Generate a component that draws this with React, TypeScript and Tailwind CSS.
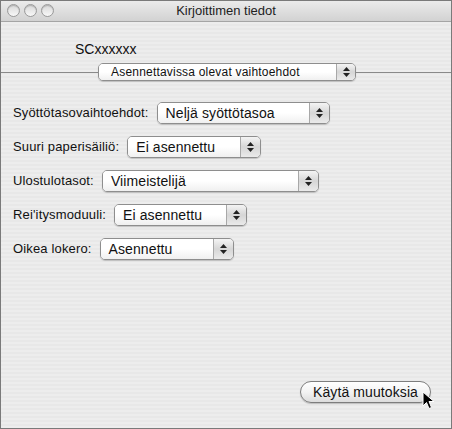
import React from "react";

const font = { fontFamily: '"Liberation Sans", Arial, sans-serif' };

function Arrows({ small }: { small?: boolean }) {
  return (
    <div
      className={`flex flex-col items-center justify-center gap-[2px] border-l border-[#a8a8a8] bg-gradient-to-b from-[#f4f4f4] via-[#d6d6d6] to-[#eaeaea] ${
        small ? "w-[19px]" : "w-[20px]"
      }`}
    >
      <svg width="7" height="4" viewBox="0 0 7 4">
        <path d="M3.5 0 L7 4 L0 4 Z" fill="#222" />
      </svg>
      <svg width="7" height="4" viewBox="0 0 7 4">
        <path d="M0 0 L7 0 L3.5 4 Z" fill="#222" />
      </svg>
    </div>
  );
}

function Popup({
  value,
  width,
  small,
}: {
  value: string;
  width: string;
  small?: boolean;
}) {
  return (
    <div
      className={`flex shrink-0 overflow-hidden rounded-[5px] border border-[#8e8e8e] shadow-[0_1px_1px_rgba(0,0,0,0.18)] ${width} ${
        small ? "h-[18px]" : "h-[22px]"
      }`}
    >
      <div
        className={`flex flex-1 items-center bg-gradient-to-b from-white via-white to-[#f0f0f0] text-[#111] ${
          small ? "pl-[12px] text-[12px] tracking-[0.2px]" : "pl-[8px] text-[14px] tracking-[0.1px]"
        }`}
      >
        {value}
      </div>
      <Arrows small={small} />
    </div>
  );
}

function Row({ label, value, width }: { label: string; value: string; width: string }) {
  return (
    <div className="flex items-center gap-[8px] pl-[12px]">
      <span className="text-[13px] tracking-[0.15px] text-[#111]">{label}</span>
      <Popup value={value} width={width} />
    </div>
  );
}

export default function App() {
  return (
    <div
      style={font}
      className="relative flex h-[429px] w-[452px] flex-col overflow-hidden border border-[#7a7a7a] bg-[#ececec]"
    >
      {/* title bar */}
      <div className="relative flex h-[21px] shrink-0 items-center justify-center border-b border-[#a5a5a5] bg-gradient-to-b from-[#ebebeb] to-[#d2d2d2]">
        <div className="absolute left-[6px] top-[3px] flex gap-[4px]">
          {[0, 1, 2].map((i) => (
            <div
              key={i}
              className="h-[13px] w-[13px] rounded-full border border-[#9a9a9a] bg-gradient-to-b from-[#d8d8d8] to-[#f8f8f8] shadow-[inset_0_1px_1px_rgba(0,0,0,0.2)]"
            />
          ))}
        </div>
        <span className="text-[13px] text-[#222]">Kirjoittimen tiedot</span>
      </div>

      {/* body */}
      <div className="flex flex-1 flex-col bg-[repeating-linear-gradient(0deg,#ededed_0px,#ededed_2px,#e8e8e8_2px,#e8e8e8_4px)]">
        <div className="pl-[74px] pt-[17px] text-[14px] text-[#111]">SCxxxxxx</div>

        <div className="mt-[3px] flex items-center">
          <div className="h-px w-[97px] bg-[#8a8a8a]" />
          <Popup value="Asennettavissa olevat vaihtoehdot" width="w-[258px]" small />
          <div className="h-px flex-1 bg-[#8a8a8a]" />
        </div>

        <div className="mt-[21px] flex flex-col gap-[12px]">
          <Row label="Syöttötasovaihtoehdot:" value="Neljä syöttötasoa" width="w-[173px]" />
          <Row label="Suuri paperisäiliö:" value="Ei asennettu" width="w-[134px]" />
          <Row label="Ulostulotasot:" value="Viimeistelijä" width="w-[217px]" />
          <Row label="Rei'itysmoduuli:" value="Ei asennettu" width="w-[133px]" />
          <Row label="Oikea lokero:" value="Asennettu" width="w-[134px]" />
        </div>

        <div className="mt-auto flex justify-end pb-[25px] pr-[20px]">
          <button className="flex h-[22px] w-[131px] items-center justify-center rounded-full border border-[#7d7d7d] bg-gradient-to-b from-white via-[#f3f3f3] to-[#dcdcdc] text-[14px] tracking-[0.1px] text-[#111] shadow-[0_1px_1px_rgba(0,0,0,0.2)]">
            Käytä muutoksia
          </button>
        </div>
      </div>

      {/* mouse pointer */}
      <svg
        className="absolute left-[421px] top-[390px]"
        width="13"
        height="19"
        viewBox="0 0 13 19"
      >
        <path
          d="M1 1 L1 15 L4.5 11.5 L7 17.5 L9.5 16.5 L7 10.5 L12 10.5 Z"
          fill="#000"
          stroke="#fff"
          strokeWidth="1"
        />
      </svg>
    </div>
  );
}
